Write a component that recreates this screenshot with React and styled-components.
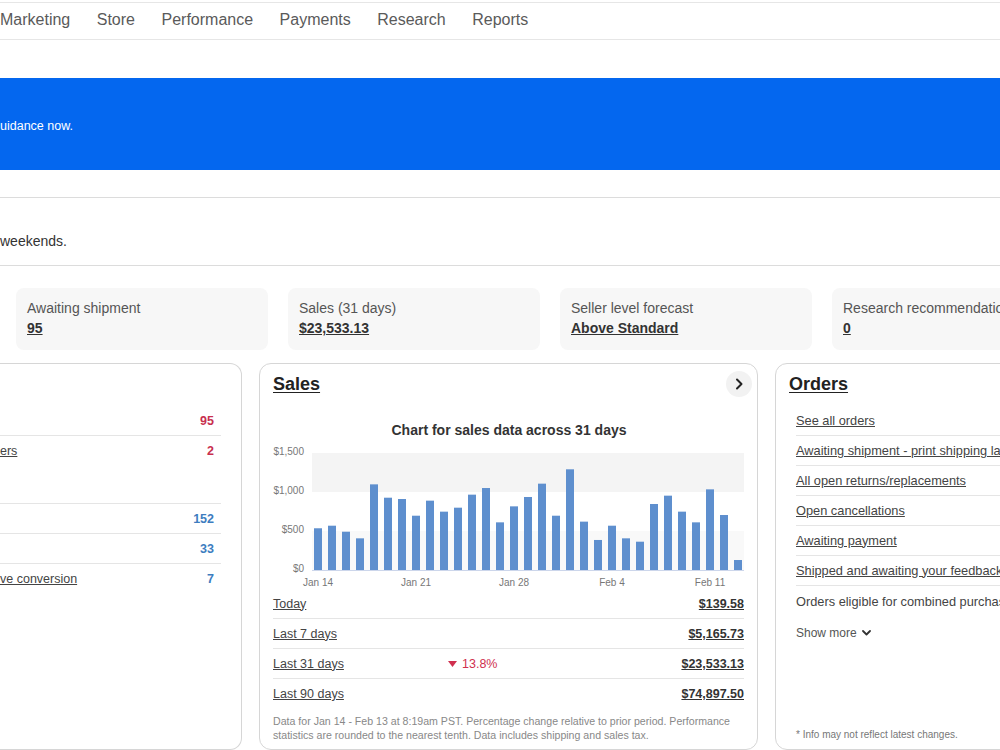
import React from "react";
import styled, { createGlobalStyle } from "styled-components";

const Global = createGlobalStyle`
  html, body { margin: 0; padding: 0; background: #fff; }
  body { font-family: "Liberation Sans", Arial, sans-serif; color: #333; overflow: hidden; }
`;

const Viewport = styled.div`
  width: 1000px;
  height: 750px;
  overflow: hidden;
`;

const Nav = styled.nav`
  margin-top: 2px;
  height: 36px;
  box-sizing: content-box;
  border-top: 1px solid #e6e6e6;
  border-bottom: 1px solid #e6e6e6;
  display: flex;
  align-items: center;
  gap: 26.5px;
  padding-bottom: 0;
`;

const NavItem = styled.a`
  font-size: 16px;
  line-height: 18px;
  margin-top: -3px;
  color: #5a5a5a;
  text-decoration: none;
  white-space: nowrap;
`;

const Banner = styled.div`
  margin-top: 38px;
  height: 92px;
  background: #0467ef;
  display: flex;
  align-items: center;
  padding-top: 3px;
  box-sizing: border-box;
  color: #fff;
  font-size: 12.5px;
`;

const Notice = styled.div`
  margin-top: 27px;
  border-top: 1px solid #dcdcdc;
  border-bottom: 1px solid #dcdcdc;
  padding: 35px 0 16px;
  font-size: 14px;
  line-height: 16px;
  color: #333;
`;

const Tiles = styled.div`
  margin-top: 22px;
  padding-left: 16px;
  display: flex;
  gap: 20px;
`;

const Tile = styled.div`
  flex: 0 0 252px;
  height: 62px;
  box-sizing: border-box;
  background: #f7f7f7;
  border-radius: 8px;
  padding: 11px 11px 0;
`;

const TileLabel = styled.div`
  font-size: 14px;
  line-height: 18px;
  color: #555;
  white-space: nowrap;
`;

const TileValue = styled.a`
  display: inline-block;
  font-size: 14px;
  line-height: 22px;
  font-weight: 700;
  color: #333;
  text-decoration: underline;
`;

const Cards = styled.div`
  margin-top: 13px;
  display: flex;
  gap: 17px;
  align-items: stretch;
`;

const Card = styled.section`
  flex: 0 0 ${(p) => p.$w}px;
  box-sizing: border-box;
  border: 1px solid #d6d6d6;
  border-left: ${(p) => (p.$cut ? "none" : "1px solid #d6d6d6")};
  border-radius: ${(p) => (p.$cut ? "0 12px 12px 0" : "12px")};
  padding: 8px ${(p) => p.$pr}px 7px ${(p) => p.$pl}px;
  display: flex;
  flex-direction: column;
`;

const CardHeader = styled.div`
  height: 24px;
  display: flex;
  align-items: center;
  justify-content: space-between;
`;

const CardTitle = styled.a`
  font-size: 18px;
  font-weight: 700;
  color: #222;
  text-decoration: underline;
  text-underline-offset: 2px;
`;

const RoundButton = styled.button`
  width: 26px;
  height: 26px;
  margin-right: -8px;
  border: none;
  border-radius: 50%;
  background: #f2f2f2;
  display: flex;
  align-items: center;
  justify-content: center;
  padding: 0;
`;

const List = styled.ul`
  list-style: none;
  margin: 10px ${(p) => p.$mr || 0}px 0 ${(p) => p.$ml || 0}px;
  padding: 0;
`;

const TaskRow = styled.li`
  height: ${(p) => p.$h || 30}px;
  box-sizing: border-box;
  display: flex;
  justify-content: space-between;
  align-items: ${(p) => (p.$h ? "flex-start" : "center")};
  padding: ${(p) => (p.$h ? "7px" : "0")} 7px 0 0;
  border-bottom: ${(p) => (p.$last ? "none" : "1px solid #e5e5e5")};
  font-size: 12.5px;
`;

const RowLink = styled.a`
  color: #444;
  text-decoration: underline;
  white-space: nowrap;
  line-height: 16px;
`;

const OrderLink = styled(RowLink)`
  font-size: 12.8px;
`;

const Count = styled.span`
  font-weight: 700;
  font-size: 12.5px;
  line-height: 16px;
  color: ${(p) => (p.$tone === "red" ? "#c8304f" : "#3d7dbf")};
`;

const ChartBox = styled.svg`
  display: block;
  margin-top: 22px;
  width: 471px;
  height: 171px;
`;

const SalesRow = styled.div`
  height: 30px;
  box-sizing: border-box;
  display: grid;
  grid-template-columns: 175px 1fr auto;
  align-items: center;
  border-bottom: ${(p) => (p.$last ? "none" : "1px solid #e5e5e5")};
  font-size: 12.5px;
`;

const SalesValue = styled.a`
  font-weight: 700;
  color: #333;
  text-decoration: underline;
`;

const Change = styled.span`
  display: flex;
  align-items: center;
  gap: 5px;
  color: #d0304f;
  font-size: 12.5px;
`;

const Footnote = styled.p`
  margin: 5px 0 0;
  font-size: 10.6px;
  line-height: 14px;
  color: #888;
`;

const OrderRow = styled.li`
  height: 30px;
  box-sizing: border-box;
  display: flex;
  align-items: center;
  border-bottom: ${(p) => (p.$line ? "1px solid #e5e5e5" : "none")};
  font-size: 12.8px;
  white-space: nowrap;
`;

const PlainText = styled.span`
  color: #444;
`;

const ShowMore = styled.button`
  border: none;
  background: none;
  padding: 3px 0 0;
  display: flex;
  align-items: center;
  gap: 5px;
  font-family: inherit;
  font-size: 12px;
  color: #555;
`;

const SmallNote = styled.p`
  margin: auto 0 0 7px;
  font-size: 10px;
  line-height: 14px;
  color: #777;
`;

const bars = [535, 568, 491, 406, 1098, 927, 910, 696, 889, 748, 799, 966, 1051, 611, 816, 936, 1107, 696, 1291, 620, 385, 568, 406, 363, 846, 953, 748, 611, 1034, 705, 128];

function SalesChart() {
  const base = 152;
  const scale = 117 / 1500;
  const yTicks = [
    { v: "$1,500", y: 35 },
    { v: "$1,000", y: 74 },
    { v: "$500", y: 113 },
    { v: "$0", y: 152 },
  ];
  const xLabels = [
    { t: "Jan 14", i: 0 },
    { t: "Jan 21", i: 7 },
    { t: "Jan 28", i: 14 },
    { t: "Feb 4", i: 21 },
    { t: "Feb 11", i: 28 },
  ];
  return (
    <ChartBox viewBox="0 0 471 171">
      <text x="236" y="17" textAnchor="middle" fontFamily="Liberation Sans, Arial, sans-serif" fontSize="14" fontWeight="700" fill="#333">
        Chart for sales data across 31 days
      </text>
      <rect x="39" y="35" width="432" height="39" fill="#f4f4f4" />
      <rect x="39" y="113" width="432" height="39" fill="#f9f9f9" />
      {yTicks.map((t) => (
        <text key={t.v} x="31" y={t.y + 2} textAnchor="end" fontFamily="Liberation Sans, Arial, sans-serif" fontSize="10" fill="#777">
          {t.v}
        </text>
      ))}
      {bars.map((v, i) => {
        const h = v * scale;
        return <rect key={i} x={41 + i * 14} y={base - h} width="8" height={h} fill="#5e8fce" />;
      })}
      <line x1="39" x2="471" y1="152.5" y2="152.5" stroke="#ccd6eb" />
      {xLabels.map((l) => (
        <text key={l.t} x={45 + l.i * 14} y="168" textAnchor="middle" fontFamily="Liberation Sans, Arial, sans-serif" fontSize="10" fill="#777">
          {l.t}
        </text>
      ))}
    </ChartBox>
  );
}

const Chevron = () => (
  <svg width="10" height="12" viewBox="0 0 10 12">
    <path d="M3 1.5 L7.5 6 L3 10.5" fill="none" stroke="#222" strokeWidth="2" strokeLinecap="round" strokeLinejoin="round" />
  </svg>
);

const ChevronDown = () => (
  <svg width="9" height="6" viewBox="0 0 9 6">
    <path d="M1 1 L4.5 4.5 L8 1" fill="none" stroke="#333" strokeWidth="1.8" strokeLinecap="round" strokeLinejoin="round" />
  </svg>
);

const DownTriangle = () => (
  <svg width="9" height="6" viewBox="0 0 9 6">
    <path d="M0 0 H9 L4.5 6 Z" fill="#d0304f" />
  </svg>
);

export default function App() {
  return (
    <Viewport>
      <Global />
      <Nav>
        {["Marketing", "Store", "Performance", "Payments", "Research", "Reports"].map((n) => (
          <NavItem key={n}>{n}</NavItem>
        ))}
      </Nav>
      <Banner>uidance now.</Banner>
      <Notice>weekends.</Notice>
      <Tiles>
        <Tile>
          <TileLabel>Awaiting shipment</TileLabel>
          <TileValue>95</TileValue>
        </Tile>
        <Tile>
          <TileLabel>Sales (31 days)</TileLabel>
          <TileValue>$23,533.13</TileValue>
        </Tile>
        <Tile>
          <TileLabel>Seller level forecast</TileLabel>
          <TileValue>Above Standard</TileValue>
        </Tile>
        <Tile>
          <TileLabel>Research recommendations</TileLabel>
          <TileValue>0</TileValue>
        </Tile>
      </Tiles>
      <Cards>
        <Card $w={242} $cut $pl={0} $pr={20}>
          <CardHeader />
          <List>
            <TaskRow>
              <RowLink />
              <Count $tone="red">95</Count>
            </TaskRow>
            <TaskRow $h={68}>
              <RowLink>ers</RowLink>
              <Count $tone="red">2</Count>
            </TaskRow>
            <TaskRow>
              <RowLink />
              <Count>152</Count>
            </TaskRow>
            <TaskRow>
              <RowLink />
              <Count>33</Count>
            </TaskRow>
            <TaskRow $last>
              <RowLink>ve conversion</RowLink>
              <Count>7</Count>
            </TaskRow>
          </List>
        </Card>
        <Card $w={497} $pl={13} $pr={13}>
          <CardHeader>
            <CardTitle>Sales</CardTitle>
            <RoundButton aria-label="Open sales">
              <Chevron />
            </RoundButton>
          </CardHeader>
          <SalesChart />
          <div>
            <SalesRow>
              <RowLink>Today</RowLink>
              <span />
              <SalesValue>$139.58</SalesValue>
            </SalesRow>
            <SalesRow>
              <RowLink>Last 7 days</RowLink>
              <span />
              <SalesValue>$5,165.73</SalesValue>
            </SalesRow>
            <SalesRow>
              <RowLink>Last 31 days</RowLink>
              <Change>
                <DownTriangle />
                13.8%
              </Change>
              <SalesValue>$23,533.13</SalesValue>
            </SalesRow>
            <SalesRow $last>
              <RowLink>Last 90 days</RowLink>
              <span />
              <SalesValue>$74,897.50</SalesValue>
            </SalesRow>
          </div>
          <Footnote>
            Data for Jan 14 - Feb 13 at 8:19am PST. Percentage change relative to prior period. Performance statistics are rounded to the nearest tenth. Data includes shipping and sales tax.
          </Footnote>
        </Card>
        <Card $w={498} $pl={13} $pr={20}>
          <CardHeader>
            <CardTitle>Orders</CardTitle>
          </CardHeader>
          <List $ml={7}>
            <OrderRow $line><OrderLink>See all orders</OrderLink></OrderRow>
            <OrderRow $line><OrderLink>Awaiting shipment - print shipping labels</OrderLink></OrderRow>
            <OrderRow $line><OrderLink>All open returns/replacements</OrderLink></OrderRow>
            <OrderRow $line><OrderLink>Open cancellations</OrderLink></OrderRow>
            <OrderRow $line><OrderLink>Awaiting payment</OrderLink></OrderRow>
            <OrderRow $line><OrderLink>Shipped and awaiting your feedback</OrderLink></OrderRow>
            <OrderRow><PlainText>Orders eligible for combined purchases</PlainText></OrderRow>
            <OrderRow>
              <ShowMore>
                Show more <ChevronDown />
              </ShowMore>
            </OrderRow>
          </List>
          <SmallNote>* Info may not reflect latest changes.</SmallNote>
        </Card>
      </Cards>
    </Viewport>
  );
}
